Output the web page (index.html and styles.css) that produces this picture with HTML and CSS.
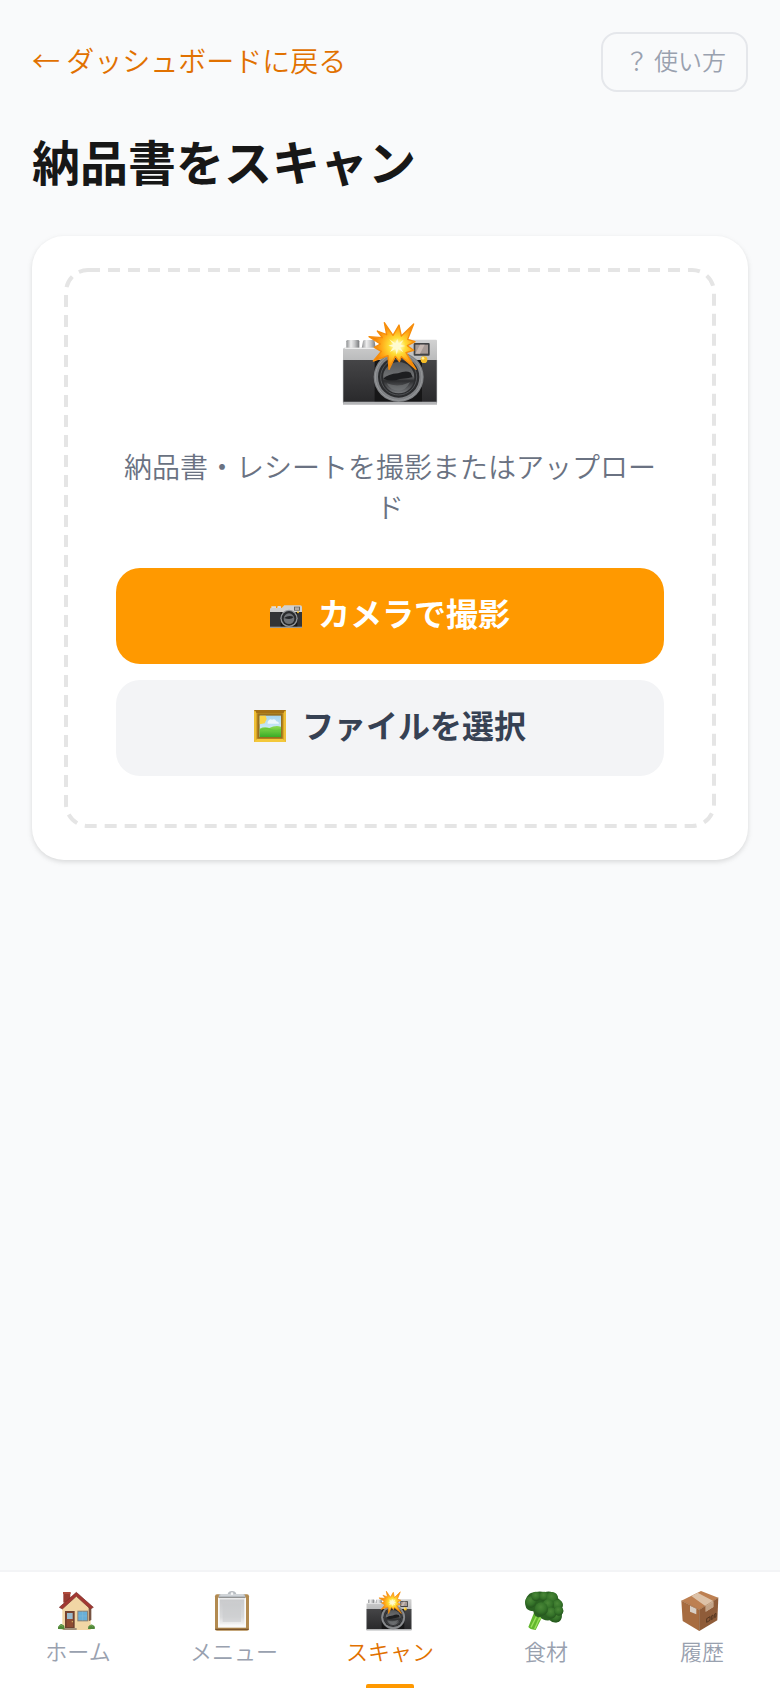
FILE: index.html
```html
<!DOCTYPE html>
<html lang="ja">
<head>
<meta charset="utf-8">
<meta name="viewport" content="width=device-width, initial-scale=1">
<title>納品書をスキャン</title>
<link rel="stylesheet" href="styles.css">
</head>
<body>
<svg class="defs" aria-hidden="true">
  <defs>
    <linearGradient id="silver" x1="0" y1="0" x2="0" y2="1"><stop offset="0" stop-color="#d2d2d2"/><stop offset="1" stop-color="#b9babb"/></linearGradient>
    <linearGradient id="leather" x1="0" y1="0" x2="0" y2="1"><stop offset="0" stop-color="#454547"/><stop offset="1" stop-color="#29292b"/></linearGradient>
    <linearGradient id="knob" x1="0" y1="0" x2="1" y2="0"><stop offset="0" stop-color="#8d8f91"/><stop offset=".35" stop-color="#eeeeee"/><stop offset=".65" stop-color="#c4c5c6"/><stop offset="1" stop-color="#77797b"/></linearGradient>
    <linearGradient id="lens" x1="0" y1="0" x2="0" y2="1"><stop offset="0" stop-color="#555759"/><stop offset=".45" stop-color="#6d6f71"/><stop offset=".6" stop-color="#2c2d2f"/><stop offset="1" stop-color="#77797c"/></linearGradient>
    <radialGradient id="flash" gradientUnits="userSpaceOnUse" cx="232" cy="138" r="70"><stop offset="0" stop-color="#ffffff"/><stop offset=".14" stop-color="#fff9b0"/><stop offset=".36" stop-color="#ffdc35"/><stop offset=".7" stop-color="#ffa818"/><stop offset="1" stop-color="#f58408"/></radialGradient>
    <linearGradient id="paper" x1="0" y1="0" x2="0" y2="1"><stop offset="0" stop-color="#c9cacc"/><stop offset=".7" stop-color="#d8d9da"/><stop offset="1" stop-color="#f3f3f3"/></linearGradient>
    <radialGradient id="leaf" cx=".45" cy=".35" r=".65"><stop offset="0" stop-color="#4b8838"/><stop offset=".6" stop-color="#357329"/><stop offset="1" stop-color="#24551d"/></radialGradient>
    <linearGradient id="sky" x1="0" y1="0" x2="0" y2="1"><stop offset="0" stop-color="#a6d5f0"/><stop offset="1" stop-color="#e8f5f8"/></linearGradient>
    <linearGradient id="hill" x1="0" y1="0" x2="0" y2="1"><stop offset="0" stop-color="#8edb4f"/><stop offset="1" stop-color="#38ad27"/></linearGradient>
    <symbol id="camera-flash" viewBox="60 48 300 276">
      <path d="M79 145V124q0-4 5-4h29q5 0 5 4v21z" fill="url(#knob)"/>
      <path d="M125 145l4-21q1-4 5-4h26q4 0 4 4l3 21z" fill="url(#knob)"/>
      <path d="M69 148q0-5 5-5h98l16-24h160q3 0 3 4v60H69z" fill="url(#silver)"/>
      <path d="M74 145h98" stroke="#ededed" stroke-width="4"/>
      <path d="M69 180h282v128H69z" fill="url(#leather)"/>
      <path d="M164 180h142v128H164z" fill="#161617"/>
      <path d="M69 305h282v9H69z" fill="#b4b5b7"/>
      <path d="M70 180v128M350 180v128" stroke="#8d8e90" stroke-width="2"/>
      <circle cx="236" cy="231" r="75" fill="#7f8184"/>
      <circle cx="236" cy="231" r="70" fill="none" stroke="#97999b" stroke-width="3"/>
      <circle cx="236" cy="231" r="62" fill="#2b2c2e"/>
      <circle cx="236" cy="231" r="54" fill="none" stroke="#515356" stroke-width="3"/>
      <circle cx="236" cy="233" r="47" fill="url(#lens)"/>
      <path d="M190 236q14-14 44-16 24-10 38-2l6 14q-16 4-38 5-26 10-50-1z" fill="#1d1e20"/>
      <path d="M200 250q34 14 70-3-15 27-35 25-24-1-35-22z" fill="#77797c" opacity=".6"/>
      <rect x="281" y="129" width="48" height="38" rx="3" fill="#424345"/>
      <rect x="286" y="134" width="38" height="27" fill="#a69a96"/>
      <path d="M286 161l14-27h14l-14 27z" fill="#c6b8b2"/>
      <circle cx="312" cy="179" r="10" fill="#f5bd27"/>
      <circle cx="309" cy="175" r="4" fill="#fff09b"/>
      <path d="M193 68l26 38 18-31 7 33 37-36-18 46 22 7-23 12 19 14-23 7 30 50-44-38-6 15-12-16-19 39-3-41-44 16 24-29-21-12 18-10-34-22 40 3-15-20 28 11z" fill="url(#flash)" stroke="#f68d0b" stroke-width="4" stroke-linejoin="round"/>
      <path d="M232 117l4 13 15-11-10 15 15 4-16 4 10 15-15-10-5 17-4-17-16 9 10-15-15-4 15-4-12-15 18 12z" fill="#fffbd0"/>
    </symbol>
  </defs>
</svg>

<main class="page">
  <header class="topbar">
    <a class="back" href="#dashboard">← ダッシュボードに戻る</a>
    <button class="help" type="button">？ 使い方</button>
  </header>
  <h1 class="title">納品書をスキャン</h1>
  <section class="card">
    <div class="dropzone">
      <svg class="dropzone-outline" aria-hidden="true"><rect class="dashes" x="2" y="2" rx="22"/></svg>
      <svg class="hero" aria-hidden="true"><use href="#camera-flash"/></svg>
      <p class="lead">納品書・レシートを撮影またはアップロード</p>
      <div class="actions">
        <button class="action primary" type="button">
          <svg class="action-icon" viewBox="510 114 96 96" aria-hidden="true">
            <path d="M514 146v-7h14v7M531 146l2-8h9l2 8" fill="#dedede"/>
            <path d="M510 147q0-3 3-3h32l8-8h48q5 0 5 5v20h-96z" fill="#d1d0ce"/>
            <path d="M510 156h96v46h-96z" fill="#333436"/>
            <path d="M542 156h50v46h-50z" fill="#18191a"/>
            <path d="M510 200h96v4h-96z" fill="#9d9a94"/>
            <circle cx="567" cy="175" r="26" fill="#929598"/>
            <circle cx="567" cy="175" r="22" fill="#292b2d"/>
            <circle cx="567" cy="176" r="16" fill="#707376"/>
            <path d="M552 174q15-10 29-3-8 10-29 3z" fill="#242628"/>
            <path d="M582 140h18v12h-18z" fill="#68685f"/>
            <path d="M585 142h12v8h-12z" fill="#b5aaa1"/>
            <circle cx="594" cy="157" r="3" fill="#f2bb24"/>
          </svg>
          <span>カメラで撮影</span>
        </button>
        <button class="action secondary" type="button">
          <svg class="action-icon" viewBox="462 450 96 96" aria-hidden="true">
            <rect x="462" y="450" width="96" height="96" rx="2" fill="#dba323"/>
            <path d="M462 450h96l-8 9h-80z" fill="#a47014"/>
            <path d="M462 546h96l-9-9h-78z" fill="#f3c83a"/>
            <path d="M465 454v88M555 454v88" stroke="#f7ce43" stroke-width="4"/>
            <rect x="472" y="460" width="76" height="76" fill="#98701e"/>
            <rect x="479" y="467" width="64" height="64" fill="url(#sky)"/>
            <path d="M479 506q14-7 29-2 18-9 35-4v31h-64z" fill="url(#hill)"/>
            <path d="M479 511q20-9 33-2 16 7 31 0" fill="none" stroke="#65c83c" stroke-width="4"/>
            <path d="M503 486q4-11 13-7 10-4 13 5 8 1 8 7h-34z" fill="#ffffff" opacity=".75"/>
            <path d="M479 467h18l3 10-6 13-15 3z" fill="#fbd545"/>
          </svg>
          <span>ファイルを選択</span>
        </button>
      </div>
    </div>
  </section>
</main>

<nav class="tabs" aria-label="メイン">
  <a class="tab" href="#home">
    <svg class="tab-icon" viewBox="162 84 144 132" aria-hidden="true">
      <path d="M190 98h21v30h-21z" fill="#983c32"/><path d="M189 96h23v6h-23z" fill="#b14b3d"/>
      <path d="M187 140l42-38 43 38v70h-85z" fill="#f1d6a5"/>
      <path d="M266 138l8 7v35l-8 4z" fill="#775443"/>
      <path d="M178 142l51-45 51 45-9 5-42-38-42 38z" fill="#a33832" stroke="#76302b" stroke-width="2"/>
      <path d="M195 153h29v52h-29z" fill="#70402e"/><path d="M200 158h19v43h-19z" fill="#8f4a31"/>
      <path d="M201 159h17v18h-17z" fill="#97b9cc"/><circle cx="217" cy="185" r="2" fill="#e0bd67"/>
      <path d="M232 152h32v32h-32z" fill="#8b8174"/><path d="M235 155h26v26h-26z" fill="#67afd9"/>
      <path d="M235 168h26M248 155v26" stroke="#81bad8" stroke-width="2"/>
      <path d="M190 204h40v6h-40z" fill="#a2917b"/>
      <path d="M174 207q-2-8 5-12 4-5 9-1 7 1 5 14zM264 207q-1-9 6-12 6-4 9 1 8 3 5 11z" fill="#4f8738"/>
      <path d="M177 199q5-6 12 0M269 199q4-6 10 0" fill="none" stroke="#75a954" stroke-width="3"/>
    </svg>
    <span>ホーム</span>
  </a>
  <a class="tab" href="#menu">
    <svg class="tab-icon" viewBox="630 84 144 132" aria-hidden="true">
      <rect x="645" y="103" width="102" height="109" rx="6" fill="#b28a50"/>
      <path d="M646 208h100" stroke="#79532a" stroke-width="4"/>
      <path d="M654 113h84v90h-84z" fill="#f9f9f9"/>
      <path d="M659 118h74v76h-74z" fill="url(#paper)"/>
      <path d="M668 130h55v56h-55z" fill="#c9cacc" opacity=".55"/>
      <path d="M656 113v-5q0-6 6-6h21q2-9 13-9t13 9h21q6 0 6 6v5z" fill="#b8bdc2"/>
      <path d="M661 105h70" stroke="#e8ebed" stroke-width="3"/>
      <circle cx="696" cy="101" r="4" fill="#f4f5f6"/>
      <path d="M657 113h78" stroke="#73777b" stroke-width="2"/>
    </svg>
    <span>メニュー</span>
  </a>
  <a class="tab active" href="#scan" aria-current="page">
    <svg class="tab-icon" viewBox="0 0 48 44" aria-hidden="true"><use href="#camera-flash" x="-1" y="0" width="48" height="44"/></svg>
    <span>スキャン</span>
  </a>
  <a class="tab" href="#ingredients">
    <svg class="tab-icon" viewBox="546 84 144 132" aria-hidden="true">
      <path d="M582 158l-17 43q4 7 22 9l19-38 16-7-5-13z" fill="#61b72d"/>
      <path d="M590 168l-17 34M601 168l-17 39M610 164l-12 16" stroke="#9be05c" stroke-width="4"/>
      <path d="M565 105q7-9 22-8 12-5 26 0 13-5 24 0 14 2 17 18 15 9 12 27 8 12 0 20-1 23-14 25-14 3-23-6-20 2-28-10-17 4-21-17-22-1-24-19-1-20 9-30z" fill="#2b6222"/>
      <circle cx="572" cy="126" r="17" fill="url(#leaf)"/><circle cx="588" cy="109" r="14" fill="url(#leaf)"/>
      <circle cx="612" cy="109" r="14" fill="url(#leaf)"/><circle cx="636" cy="114" r="18" fill="url(#leaf)"/>
      <circle cx="653" cy="135" r="16" fill="url(#leaf)"/><circle cx="625" cy="134" r="17" fill="url(#leaf)"/>
      <circle cx="648" cy="170" r="17" fill="url(#leaf)"/><circle cx="633" cy="159" r="17" fill="url(#leaf)"/>
      <circle cx="656" cy="153" r="14" fill="url(#leaf)"/><circle cx="604" cy="147" r="20" fill="url(#leaf)"/>
    </svg>
    <span>食材</span>
  </a>
  <a class="tab" href="#history">
    <svg class="tab-icon" viewBox="1014 84 144 132" aria-hidden="true">
      <path d="M1024 122l59-29 52 20-57 36z" fill="#bd8052"/>
      <path d="M1024 122l54 27v64l-50-30z" fill="#a76c40"/>
      <path d="M1078 149l57-36-3 68-54 32z" fill="#8f5c39"/>
      <path d="M1054 108l19-10 47 25v18l-23 14v-16z" fill="#ddc2a8"/>
      <path d="M1097 139l23-14v16l-23 14z" fill="#c2a387"/>
      <path d="M1050 137l19 9v17l-19-8z" fill="#d8cfc6"/>
      <path d="M1024 122l54 27 57-36M1078 149v64" fill="none" stroke="#85542f" stroke-width="1"/>
      <path d="M1100 176l10-6v11l-10 6zM1114 168l5-3v11l-5 3zM1124 162l4-2v10l-4 3z" fill="none" stroke="#573721" stroke-width="3"/>
    </svg>
    <span>履歴</span>
  </a>
</nav>
</body>
</html>
```
FILE: styles.css
```css
* {
  box-sizing: border-box;
}

body {
  margin: 0;
  min-height: 100vh;
  display: flex;
  flex-direction: column;
  background: #f9fafb;
  color: #171717;
  font-family: "Noto Sans CJK JP", sans-serif;
  font-weight: 350;
}

button {
  font-family: inherit;
  cursor: pointer;
}

.defs {
  position: absolute;
  width: 0;
  height: 0;
}

.page {
  flex: 1;
  padding: 32px;
}

.topbar {
  display: flex;
  align-items: center;
  justify-content: space-between;
}

.back {
  padding-bottom: 4px;
  color: #e17100;
  font-size: 28px;
  line-height: 40px;
  text-decoration: none;
}

.help {
  height: 60px;
  padding: 0 20px 4px 22px;
  border: 2px solid #e5e7eb;
  border-radius: 16px;
  background: transparent;
  color: #99a1af;
  font-size: 24px;
  font-weight: 350;
  line-height: 32px;
}

.title {
  margin: 36px 0 44px;
  font-size: 48px;
  font-weight: 700;
  line-height: 64px;
}

.card {
  padding: 32px;
  border-radius: 32px;
  background: #ffffff;
  box-shadow: 0 2px 6px rgba(0, 0, 0, 0.08), 0 2px 4px rgba(0, 0, 0, 0.06);
}

.dropzone {
  position: relative;
  padding: 48px 52px 52px;
  text-align: center;
}

.dropzone-outline {
  position: absolute;
  inset: 0;
  width: 100%;
  height: 100%;
  pointer-events: none;
}

.dashes {
  width: calc(100% - 4px);
  height: calc(100% - 4px);
  fill: none;
  stroke: #e5e5e5;
  stroke-width: 4px;
  stroke-dasharray: 12 8;
}

.hero {
  display: block;
  width: 100px;
  height: 92px;
  margin: 0 auto 38px;
}

.lead {
  margin: 0 0 42px;
  color: #6a7282;
  font-size: 28px;
  line-height: 40px;
  line-break: anywhere;
}

.actions {
  display: grid;
  gap: 16px;
}

.action {
  display: flex;
  align-items: center;
  justify-content: center;
  gap: 16px;
  height: 96px;
  padding: 0 24px 4px;
  border: 0;
  border-radius: 24px;
  font-size: 32px;
  font-weight: 700;
  line-height: 48px;
}

.action span {
  padding-bottom: 4px;
}

.primary {
  background: #ff9900;
  color: #ffffff;
}

.secondary {
  background: #f3f4f6;
  color: #364153;
}

.action-icon {
  width: 32px;
  height: 32px;
}

.tabs {
  display: grid;
  grid-template-columns: repeat(5, 1fr);
  border-top: 2px solid #f3f4f6;
  background: #ffffff;
}

.tab {
  position: relative;
  display: flex;
  flex-direction: column;
  align-items: center;
  gap: 2px;
  padding: 16px 0 22px;
  color: #99a1af;
  font-size: 22px;
  line-height: 32px;
  text-decoration: none;
}

.tab-icon {
  width: 48px;
  height: 44px;
}

.active {
  color: #e17100;
}

.active::after {
  content: "";
  position: absolute;
  bottom: 0;
  width: 48px;
  height: 4px;
  border-radius: 2px 2px 0 0;
  background: #ff9900;
}
```
